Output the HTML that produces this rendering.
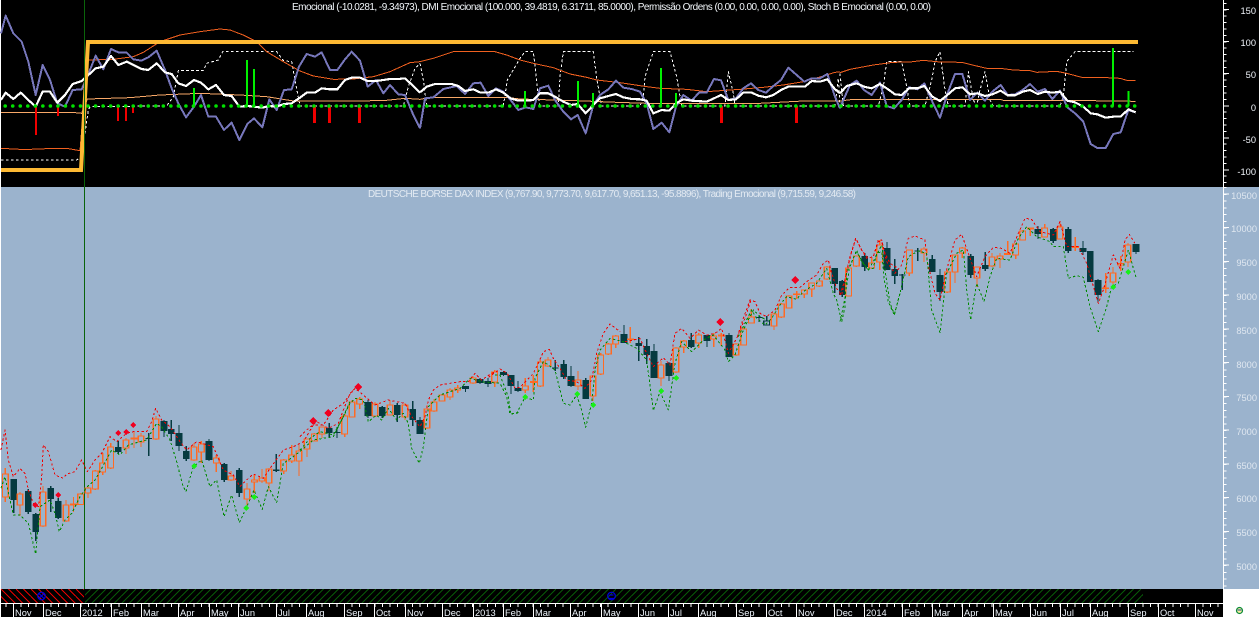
<!DOCTYPE html>
<html><head><meta charset="utf-8"><title>DAX</title>
<style>
html,body{margin:0;padding:0;background:#000;width:1259px;height:617px;overflow:hidden}
svg{display:block;font-family:"Liberation Sans",Arial,sans-serif}
</style></head><body>
<svg width="1259" height="617" viewBox="0 0 1259 617" xmlns="http://www.w3.org/2000/svg" shape-rendering="crispEdges">
<defs>
<pattern id="hr" width="15" height="15" patternUnits="userSpaceOnUse" x="1" y="589"><path d="M0 0L15 15M7.5 0L15 7.5M0 7.5L7.5 15" stroke="#e80000" stroke-width="1" fill="none"/></pattern>
<pattern id="hg" width="15" height="15" patternUnits="userSpaceOnUse" x="1" y="589"><path d="M0 15L15 0M0 7.5L7.5 0M7.5 15L15 7.5" stroke="#085808" stroke-width="1" fill="none"/></pattern>
</defs>
<rect width="1259" height="617" fill="#000"/>
<rect x="0" y="187" width="1259" height="402" fill="#9bb3cd"/>
<rect x="0" y="0" width="1" height="617" fill="#fff"/>
<rect x="1223" y="589" width="36" height="28" fill="#fff"/>

<!-- TOP PANEL -->
<g fill="none" stroke-linejoin="round">
<g transform="scale(.33333)">
<polyline stroke="#fff" stroke-width="3" stroke-dasharray="8 7" points="3,480 230,480 245,470 265,330 270,320 500,318 520,290 535,212 610,212 620,190 655,180 668,155 830,155 850,182 875,185 885,240 900,318 1210,318 1225,260 1245,205 1260,190"/>
<polyline stroke="#f0601f" stroke-width="3" points="3,445 60,448 90,448 165,445 200,445 240,452 262,180 340,178 400,170 430,157 480,125 540,105 600,95 660,87 690,90 730,105 770,125 800,155 850,185 900,213 940,228 1000,238 1060,237 1120,230 1170,215 1230,188 1260,185"/>
<polyline stroke="#f8a868" stroke-width="3" points="3,338 90,338 225,338 245,340 262,297 390,293 480,285 600,280 720,285 800,290 880,303 1000,303 1150,302 1215,295 1260,298"/>
<polyline stroke="#7777bb" stroke-width="6" points="3,100 17,47 40,100 65,125 85,185 107,285 128,195 150,240 172,310 195,320 218,270 245,268 262,230 287,167 310,208 333,147 355,157 380,158 400,178 425,182 445,172 470,152 495,210 515,265 535,310 558,352 582,320 603,285 625,350 648,350 672,390 695,368 718,420 742,372 762,355 787,382 808,298 830,330 852,270 875,268 897,200 920,162 945,170 965,157 990,210 1012,210 1035,178 1055,155 1080,182 1103,260 1128,240 1150,280 1170,255 1195,283 1215,285 1240,345 1260,385"/>
<polyline stroke="#fff" stroke-width="6.500" points="3,300 17,278 40,297 62,278 85,300 107,320 128,275 150,275 172,308 195,285 218,252 245,243 262,228 287,205 310,200 333,168 355,195 380,185 400,195 425,207 445,210 470,190 495,217 515,222 535,250 558,258 582,240 603,248 625,268 648,255 672,285 695,288 718,320 742,318 762,320 787,323 808,318 830,320 852,312 875,310 897,295 920,278 945,278 965,265 990,268 1012,268 1035,240 1055,233 1080,233 1103,243 1128,243 1150,240 1170,237 1195,237 1215,235 1240,258 1260,278"/>
</g>
<g transform="translate(420,0) scale(.33333)">
<polyline stroke="#fff" stroke-width="3" stroke-dasharray="8 7" points="0,190 10,240 20,318 250,318 262,240 300,175 315,155 340,155 350,240 355,290 360,318 415,318 420,230 430,155 520,155 530,235 545,318 660,318 670,290 675,230 700,155 750,155 770,230 785,318 915,318 925,215 940,280 945,318 1245,318 1255,235 1260,318"/>
<polyline stroke="#f0601f" stroke-width="3" points="0,185 40,175 100,155 225,155 260,165 300,180 340,190 400,203 450,222 500,232 530,240 600,248 680,260 720,265 800,268 860,275 960,268 1030,262 1090,255 1150,245 1210,228 1245,217 1260,216"/>
<polyline stroke="#f8a868" stroke-width="3" points="0,298 30,292 260,292 300,297 470,302 590,307 680,310 1000,311 1150,303 1260,303"/>
<polyline stroke="#7777bb" stroke-width="6" points="0,385 15,295 40,292 70,267 110,258 135,282 160,250 182,248 205,288 228,265 250,275 272,300 295,330 317,322 340,327 360,265 385,257 405,300 430,335 453,358 473,345 497,400 520,315 540,285 565,268 588,242 610,263 635,267 660,275 680,310 700,387 725,368 748,397 768,320 790,285 815,302 837,278 860,278 882,237 903,241 925,300 948,295 970,265 993,250 1015,270 1038,278 1060,258 1083,240 1105,203 1130,225 1153,245 1175,235 1200,235 1222,222 1245,290 1260,325"/>
<polyline stroke="#fff" stroke-width="6.500" points="0,277 20,260 45,252 95,252 115,258 135,273 160,268 182,278 205,278 228,268 250,278 272,295 295,302 317,302 340,300 360,280 385,280 405,290 430,305 453,315 473,312 497,340 520,315 540,295 565,288 588,282 610,292 635,297 660,298 680,302 700,340 725,330 748,332 768,310 790,298 815,302 860,305 882,295 903,285 925,300 948,298 970,278 993,277 1015,287 1038,292 1060,285 1083,270 1105,260 1155,260 1175,243 1200,245 1222,238 1245,268 1260,280"/>
</g>
<g transform="translate(840,0) scale(.33333)">
<polyline stroke="#fff" stroke-width="3" stroke-dasharray="8 7" points="0,220 10,318 115,318 130,260 140,185 185,185 200,260 210,318 255,318 275,240 285,185 300,155 315,270 325,318 375,318 385,215 400,300 410,318 420,270 435,215 450,300 460,318 660,318 670,290 680,185 705,155 880,155"/>
<polyline stroke="#f0601f" stroke-width="3" points="0,218 30,208 100,195 160,187 210,186 250,181 300,186 365,187 410,198 440,205 480,205 520,210 570,212 590,217 650,214 680,220 725,232 800,233 840,235 860,241 887,241"/>
<polyline stroke="#f8a868" stroke-width="3" points="0,303 40,298 480,298 490,301 680,301 887,304"/>
<polyline stroke="#7777bb" stroke-width="6" points="0,325 10,300 30,255 50,242 72,270 95,285 120,248 140,318 162,325 185,300 207,262 232,268 253,250 277,305 300,353 322,282 345,222 367,222 390,300 412,278 435,302 457,275 482,255 503,285 525,283 548,270 570,252 593,275 615,267 637,297 660,272 682,322 705,340 730,365 752,432 772,444 797,444 820,402 842,397 865,330 887,337"/>
<polyline stroke="#fff" stroke-width="6.500" points="0,280 20,258 50,250 72,260 95,265 120,252 140,265 165,283 185,285 207,265 232,265 253,258 277,290 300,303 322,285 345,265 367,262 390,283 412,280 435,288 457,283 482,272 503,286 525,286 548,275 570,270 593,282 615,275 637,278 660,275 682,302 705,307 730,320 752,340 772,343 797,353 820,350 842,350 865,328 887,337"/>
</g>
<!-- green bars -->
<path stroke="#00f000" stroke-width="2" d="M194 106V88M247 106V60M254 106V69M525 106V91M578 106V81M593 106V93M661 106V68M676 106V93M1113 106V48M1128.700 106V91"/>
<!-- red bars -->
<path stroke="#f00000" stroke-width="2" d="M36 106V135M58 106V116M118 106V121M126 106V121M133 106V113"/>
<path stroke="#f00000" stroke-width="3" d="M314.300 106V123M329.300 106V123M359.300 106V123M721.300 106V123M796.300 106V123"/>
<!-- gold -->
<polyline stroke="#fdb933" stroke-width="4" stroke-linejoin="miter" shape-rendering="auto" points="1,170 81,170 88,42 1138,42"/>
<!-- dots -->
<path d="M5.200 106H1138" stroke="#00e000" stroke-width="3.600" stroke-linecap="round" stroke-dasharray="0 7.530" shape-rendering="auto"/>
<!-- vline -->
<path d="M84.500 0V589" stroke="#0a640a" stroke-width="1"/>
</g>
<text x="292" y="10" font-size="10" fill="#f2f6fa" textLength="639" lengthAdjust="spacing">Emocional (-10.0281, -9.34973), DMI Emocional (100.000, 39.4819, 6.31711, 85.0000), Permissão Ordens (0.00, 0.00, 0.00, 0.00), Stoch B Emocional (0.00, 0.00)</text>
<text x="368" y="197" font-size="10" fill="#e3eaf2" textLength="488" lengthAdjust="spacing">DEUTSCHE BORSE DAX INDEX (9,767.90, 9,773.70, 9,617.70, 9,651.13, -95.8896), Trading Emocional (9,715.59, 9,246.58)</text>

<!-- CANDLES -->
<g fill="none" stroke-width="1">
<path stroke="#ff6a22" stroke-width="1.200" d="M5.300 468V502M20 492V516M43 486V527M66 500V522M73.500 497V512M80.700 493V505M88 486V498M95.300 470V490M102.700 453V475M110.700 443V469M126 438V454M134 432V448M141 433V447M156 416V440M194 443V461M201.300 441V463M216.300 455V472M231 471V481M247 483V505M254.300 475V493M262 469V483M269 468V491M283.700 459V474M291.700 445V463M299 445V476M307 439V457M314.300 433V441M322 427V438M344.700 414V437M352 400V417M359.700 397V409M375 402V417M390 400V415M405 403V420M427 405V429M434 399V412M442 394V401M450 388V400M457.700 385V393M473 376V384M494.700 370V387M525.300 378V393M533.300 375V392M540.300 360V387M548 357V367M578 371V390M593 375V401M600.700 353V375M608.300 343V355M615.700 335V348M630.300 327V343M661 361V386M676 347V373M683.700 340V353M698.700 333V348M713.700 333V347M721.300 333V346M736 343V356M743.700 328V345M751.300 309V323M774 313V330M781.300 303V318M789 295V308M796.700 291V299M804.300 290V298M811.700 283V297M819.300 281V287M827 266V280M848.700 268V296M856.300 256V267M871.700 258V268M879.700 240V270M909.300 250V276M924 247V262M947.300 270V293M955 255V283M962.300 247V258M977 267V287M992 253V267M1000 253V268M1007.700 241V255M1015.700 243V259M1022.700 230V240M1030.300 228V236M1044.700 224V237M1060 223V239M1075.300 237V251M1105.700 273V293M1113 267V288M1120.700 256V271M1128 243V267"/>
<path stroke="#053a40" stroke-width="1.300" d="M13.700 479V513M28.300 489V514M35.700 513V541M50.700 486V512M58.300 498V519M118.300 441V454M148.700 433V456M164 420V437M171.300 420V441M179 425V451M186.300 446V461M209 439V461M224.300 463V482M239.300 468V497M276.300 454V472M329.300 423V438M337 427V438M368 400V418M382.300 406V418M397.300 403V422M412.700 401V426M420 417V434M465.500 386V392M480 378V384M488 378V387M503.500 371V376M511 375V394M518 381V392M555.300 360V371M563.700 360V379M571 366V387M585.700 378V399M624 325V343M638.700 337V361M646.700 339V364M654 344V378M669 362V381M691.300 333V348M707 335V347M729 333V357M759 315V322M766.700 316V321M834.700 268V293M842.300 280V297M864.700 253V271M887 242V270M894.700 259V284M902.300 274V290M917.700 248V261M932.300 255V272M940 269V301M970.700 254V278M985.300 252V271M1038 226V239M1053.300 228V243M1068.300 227V253M1083 241V255M1090.300 251V282M1098 279V303M1136 244V254"/>
<path fill="#053a40" d="M13.700 479m-3.300 0h6.600V500h-6.600zM28.300 491m-3.300 0h6.600V512h-6.600zM35.700 514m-3.300 0h6.600V532h-6.600zM50.700 488m-3.300 0h6.600V499h-6.600zM58.300 501m-3.300 0h6.600V518h-6.600zM118.300 447m-3.300 0h6.600V452h-6.600zM148.700 438m-3.300 0h6.600V439h-6.600zM164 421m-3.300 0h6.600V431h-6.600zM171.300 429m-3.300 0h6.600V434h-6.600zM179 433m-3.300 0h6.600V446h-6.600zM186.300 451m-3.300 0h6.600V459h-6.600zM209 441m-3.300 0h6.600V460h-6.600zM224.300 464m-3.300 0h6.600V480h-6.600zM239.300 470m-3.300 0h6.600V493h-6.600zM276.300 469.500m-3.300 0h6.600V471h-6.600zM329.300 428m-3.300 0h6.600V433h-6.600zM337 432m-3.300 0h6.600V433h-6.600zM368 402m-3.300 0h6.600V416h-6.600zM382.300 407m-3.300 0h6.600V416h-6.600zM397.300 405m-3.300 0h6.600V415h-6.600zM412.700 409m-3.300 0h6.600V420h-6.600zM420 420m-3.300 0h6.600V434h-6.600zM465.500 386m-3.300 0h6.600V389h-6.600zM480 379m-3.300 0h6.600V383h-6.600zM488 381m-3.300 0h6.600V384h-6.600zM503.500 372m-3.300 0h6.600V375h-6.600zM511 375m-3.300 0h6.600V386h-6.600zM518 388m-3.300 0h6.600V391h-6.600zM555.300 367.500m-3.300 0h6.600V368.500h-6.600zM563.700 364m-3.300 0h6.600V377h-6.600zM571 376m-3.300 0h6.600V386h-6.600zM585.700 380m-3.300 0h6.600V399h-6.600zM624 334m-3.300 0h6.600V343h-6.600zM638.700 343m-3.300 0h6.600V346h-6.600zM646.700 346m-3.300 0h6.600V355h-6.600zM654 351m-3.300 0h6.600V378h-6.600zM669 363m-3.300 0h6.600V376h-6.600zM691.300 340m-3.300 0h6.600V347h-6.600zM707 335m-3.300 0h6.600V341h-6.600zM729 335m-3.300 0h6.600V357h-6.600zM759 317m-3.300 0h6.600V318h-6.600zM834.700 268m-3.300 0h6.600V284h-6.600zM842.300 281m-3.300 0h6.600V295h-6.600zM864.700 256m-3.300 0h6.600V267h-6.600zM887 248m-3.300 0h6.600V270h-6.600zM894.700 269m-3.300 0h6.600V276h-6.600zM902.300 274.500m-3.300 0h6.600V275.500h-6.600zM917.700 250.500m-3.300 0h6.600V251.500h-6.600zM932.300 259m-3.300 0h6.600V272h-6.600zM940 275m-3.300 0h6.600V292h-6.600zM970.700 256m-3.300 0h6.600V275h-6.600zM985.300 265m-3.300 0h6.600V269h-6.600zM1038 229m-3.300 0h6.600V234h-6.600zM1053.300 229m-3.300 0h6.600V241h-6.600zM1068.300 229m-3.300 0h6.600V251h-6.600zM1083 248m-3.300 0h6.600V252h-6.600zM1090.300 251m-3.300 0h6.600V282h-6.600zM1098 280m-3.300 0h6.600V295h-6.600zM1136 244m-3.300 0h6.600V252h-6.600z"/>
<path fill="#9bb3cd" stroke="#053a40" stroke-width="1.400" d="M766.700 321m-2.800 0h5.600V325h-5.600z"/>
<path fill="#9bb3cd" stroke="#ff6a22" stroke-width="1.400" d="M5.300 474m-2.800 0h5.600V497h-5.600zM20 494m-2.800 0h5.600V505h-5.600zM43 492m-2.800 0h5.600V526h-5.600zM66 505m-2.800 0h5.600V521h-5.600zM73.500 504m-2.800 0h5.600V505h-5.600zM80.700 494m-2.800 0h5.600V504.500h-5.600zM88 488m-2.800 0h5.600V493h-5.600zM95.300 471m-2.800 0h5.600V489h-5.600zM102.700 463m-2.800 0h5.600V472h-5.600zM110.700 447m-2.800 0h5.600V468h-5.600zM126 440m-2.800 0h5.600V448h-5.600zM134 438m-2.800 0h5.600V439h-5.600zM141 436m-2.800 0h5.600V442h-5.600zM156 419m-2.800 0h5.600V439h-5.600zM194 447m-2.800 0h5.600V460h-5.600zM201.300 444m-2.800 0h5.600V452h-5.600zM216.300 458m-2.800 0h5.600V463h-5.600zM231 476m-2.800 0h5.600V480h-5.600zM247 489m-2.800 0h5.600V499h-5.600zM254.300 480m-2.800 0h5.600V482h-5.600zM262 478m-2.800 0h5.600V481h-5.600zM269 469m-2.800 0h5.600V483h-5.600zM283.700 460m-2.800 0h5.600V471h-5.600zM291.700 455m-2.800 0h5.600V461h-5.600zM299 451m-2.800 0h5.600V461h-5.600zM307 439m-2.800 0h5.600V449h-5.600zM314.300 434m-2.800 0h5.600V441h-5.600zM322 427m-2.800 0h5.600V434h-5.600zM344.700 416m-2.800 0h5.600V434h-5.600zM352 402m-2.800 0h5.600V417h-5.600zM359.700 399m-2.800 0h5.600V404h-5.600zM375 404m-2.800 0h5.600V416h-5.600zM390 405m-2.800 0h5.600V415h-5.600zM405 405m-2.800 0h5.600V417h-5.600zM427 409m-2.800 0h5.600V428h-5.600zM434 402m-2.800 0h5.600V411h-5.600zM442 395m-2.800 0h5.600V401h-5.600zM450 390m-2.800 0h5.600V397h-5.600zM457.700 388m-2.800 0h5.600V390h-5.600zM473 378m-2.800 0h5.600V383h-5.600zM494.700 372m-2.800 0h5.600V382h-5.600zM525.300 386m-2.800 0h5.600V390h-5.600zM533.300 381.500m-2.800 0h5.600V382.500h-5.600zM540.300 362m-2.800 0h5.600V386h-5.600zM548 360m-2.800 0h5.600V366h-5.600zM578 380m-2.800 0h5.600V386h-5.600zM593 376m-2.800 0h5.600V396h-5.600zM600.700 355m-2.800 0h5.600V374h-5.600zM608.300 344m-2.800 0h5.600V354h-5.600zM615.700 336m-2.800 0h5.600V344h-5.600zM630.300 339m-2.800 0h5.600V339.500h-5.600zM661 365m-2.800 0h5.600V378h-5.600zM676 348m-2.800 0h5.600V372h-5.600zM683.700 341m-2.800 0h5.600V347h-5.600zM698.700 335m-2.800 0h5.600V343h-5.600zM713.700 336m-2.800 0h5.600V339h-5.600zM721.300 335m-2.800 0h5.600V336h-5.600zM736 344m-2.800 0h5.600V355h-5.600zM743.700 329m-2.800 0h5.600V345h-5.600zM751.300 317m-2.800 0h5.600V323h-5.600zM774 314m-2.800 0h5.600V326h-5.600zM781.300 304m-2.800 0h5.600V317h-5.600zM789 296m-2.800 0h5.600V308h-5.600zM796.700 294m-2.800 0h5.600V294.500h-5.600zM804.300 290m-2.800 0h5.600V294h-5.600zM811.700 283m-2.800 0h5.600V289h-5.600zM819.300 281m-2.800 0h5.600V286h-5.600zM827 267m-2.800 0h5.600V279h-5.600zM848.700 268m-2.800 0h5.600V296h-5.600zM856.300 256m-2.800 0h5.600V266h-5.600zM871.700 263m-2.800 0h5.600V268h-5.600zM879.700 245m-2.800 0h5.600V262h-5.600zM909.300 250m-2.800 0h5.600V273h-5.600zM924 249m-2.800 0h5.600V253h-5.600zM947.300 272m-2.800 0h5.600V292h-5.600zM955 255m-2.800 0h5.600V272h-5.600zM962.300 248m-2.800 0h5.600V253h-5.600zM977 267m-2.800 0h5.600V278h-5.600zM992 257m-2.800 0h5.600V266h-5.600zM1000 256m-2.800 0h5.600V259h-5.600zM1007.700 253.500m-2.800 0h5.600V254.500h-5.600zM1015.700 244m-2.800 0h5.600V255h-5.600zM1022.700 231m-2.800 0h5.600V240h-5.600zM1030.300 228m-2.800 0h5.600V228.700h-5.600zM1044.700 228m-2.800 0h5.600V237h-5.600zM1060 227m-2.800 0h5.600V239h-5.600zM1075.300 246.500m-2.800 0h5.600V247.500h-5.600zM1105.700 288m-2.800 0h5.600V288.500h-5.600zM1113 273m-2.800 0h5.600V282h-5.600zM1120.700 263.500m-2.800 0h5.600V265h-5.600zM1128 245m-2.800 0h5.600V262h-5.600z"/>
</g>

<!-- BANDS -->
<g fill="none" stroke-width="3" stroke-dasharray="7 7" stroke-linejoin="round">
<g transform="translate(0,400) scale(.33333)">
<polyline stroke="#f00000" points="3,150 15,90 25,180 40,230 60,205 75,220 85,270 100,310 115,320 125,230 130,135 145,155 165,225 190,235 200,222 225,215 245,180 262,215 285,180 305,160 330,110 350,125 380,100 400,95 440,95 455,65 467,25 485,60 510,80 540,125 560,150 590,125 640,140 655,175 670,210 700,225 720,260 740,240 760,222 790,235 810,205 850,150 880,140 910,125 940,75 970,75 1000,30 1030,10 1060,-30"/>
<polyline stroke="#008a00" points="3,265 15,230 30,300 40,345 60,345 85,370 107,462 120,320 135,310 150,300 165,340 178,395 195,360 215,340 240,290 262,260 285,240 305,205 335,150 360,165 385,135 420,125 440,120 470,70 485,80 510,120 530,185 548,255 558,275 580,200 605,180 630,260 650,240 672,350 695,285 718,368 745,310 762,270 787,328 805,260 830,308 850,190 880,170 905,150 940,120 1000,110 1025,60 1050,5"/>
</g>
<g transform="translate(300,340) scale(.33333)">
<polyline stroke="#f00000" points="0,290 20,270 50,245 85,265 115,250 130,210 150,160 165,145 190,165 225,195 265,180 290,185 315,190 335,230 360,260 375,230 385,180 400,150 420,135 480,125 505,125 525,100 545,120 575,100 600,90"/>
<polyline stroke="#008a00" points="0,330 30,295 60,275 100,285 125,240 150,190 165,175 190,180 205,245 230,225 245,240 265,205 290,240 310,220 325,250 335,325 358,370 370,320 385,200 420,165 450,155 480,145 510,115 545,125 600,130 620,170 630,222 655,218"/>
</g>
<g transform="translate(420,300) scale(.33333)">
<polyline stroke="#f00000" points="615,125 640,120 660,115 680,160 700,200 730,173 750,195 765,100 785,85 810,115 835,90 860,105 885,100 905,85 925,160 950,115 975,55 993,0"/>
<polyline stroke="#f00000" points="205,232 240,207 262,220 285,265 300,262 340,220 355,190 370,155 388,148 400,175 420,205 440,240 470,245 495,265 515,240 530,160 550,100 570,72 600,95"/>
<polyline stroke="#008a00" points="225,225 240,225 265,290 272,342 290,340 315,292 340,300 345,235 370,185 385,195 405,210 430,310 450,315 470,285 485,330 497,382 515,310 525,210 540,150 570,115 610,125 650,145 680,180 700,332 720,275 745,330 765,190 785,125 815,155 850,120 880,105 915,150 925,185 945,165 970,90 1000,30 1020,50 1040,60"/>
</g>
<g transform="translate(700,230) scale(.33333)">
<polyline stroke="#f00000" points="112,320 130,265 150,210 165,215 180,250 200,260 225,240 245,195 270,172 300,172 320,155 350,135 370,100 385,90 395,130 410,175 425,195 440,125 450,80 467,25 485,60 500,85 520,80 535,35 545,35 555,70 570,100 595,115"/>
<polyline stroke="#008a00" points="115,320 130,290 155,240 170,265 195,285 215,265 240,225 260,200 290,208 310,185 350,160 380,115 400,190 410,210 425,275 435,230 440,125 470,65 490,100 505,120 520,115 530,70 545,65 553,150 565,215 583,255 600,190"/>
</g>
<g transform="translate(840,190) scale(.33333)">
<polyline stroke="#f00000" points="0,315 15,270 35,185 48,145 65,180 85,205 100,200 115,150 125,150 140,215 165,250 185,225 205,145 225,138 255,150 262,215 285,310 300,330 320,240 345,150 365,133 385,190 410,260 435,200 460,172 485,175 510,190 535,130 555,85 575,88 600,125 640,135 660,95 680,170 715,170 740,220 775,340 790,300 820,195 840,235 855,150 868,133 885,160"/>
<polyline stroke="#008a00" points="0,395 12,340 28,235 50,180 65,215 85,240 105,205 125,165 135,240 150,340 163,373 180,310 205,200 235,183 260,190 275,360 300,428 320,250 350,190 370,180 380,300 392,390 410,280 432,335 450,260 470,205 510,210 535,145 560,110 590,140 630,155 640,170 670,170 685,265 710,257 730,262 750,350 775,425 800,350 815,290 835,280 850,230 865,180 880,235 888,262"/>
</g>
</g>

<!-- DIAMONDS -->
<g fill="#f00020">
<path d="M35 502l3 3-3 3-3-3zM58 492l3 3-3 3-3-3zM118 430l3 3-3 3-3-3zM126 429l3 3-3 3-3-3zM133 422l3 3-3 3-3-3z"/>
<path d="M313 417l4 4-4 4-4-4zM328 409l4 4-4 4-4-4zM358 383l4 4-4 4-4-4zM720 318l4 4-4 4-4-4zM795 276l4 4-4 4-4-4z"/>
</g>
<path fill="#18f018" d="M194 463l3 3-3 3-3-3zM246 505l3 3-3 3-3-3zM254 494l3 3-3 3-3-3zM525 394l3 3-3 3-3-3zM577 391l3 3-3 3-3-3zM593 402l3 3-3 3-3-3zM661 388l3 3-3 3-3-3zM676 375l3 3-3 3-3-3zM1113 284l3 3-3 3-3-3zM1128 269l3 3-3 3-3-3z"/>

<!-- RIGHT AXIS -->
<g stroke="#fff" fill="none">
<path d="M1223.500 0V617" stroke-width="1"/>
<path d="M1225 2.900V187" stroke-width="3" stroke-dasharray="1 5.400"/>
<path d="M1225 187.200V589" stroke-width="3" stroke-dasharray="1 5.750"/>
<path d="M1223 9.500h6M1223 41.500h6M1223 73.500h6M1223 106h6M1223 138h6M1223 170h6M1223 194h6M1223 227.700h6M1223 261.500h6M1223 295.200h6M1223 329h6M1223 362.700h6M1223 396.400h6M1223 430h6M1223 463.900h6M1223 497.600h6M1223 531.300h6M1223 565h6" stroke-width="1"/>
</g>
<g font-size="9.300" fill="#eef2f8" text-anchor="end">
<text x="1256" y="14">150</text><text x="1256" y="46">100</text><text x="1256" y="78">50</text><text x="1256" y="111">0</text><text x="1256" y="143">-50</text><text x="1256" y="175">-100</text>
</g>
<g font-size="9.300" fill="#dfe7f0" text-anchor="end">
<text x="1257" y="199">10500</text><text x="1257" y="232">10000</text><text x="1257" y="266">9500</text><text x="1257" y="300">9000</text><text x="1257" y="334">8500</text><text x="1257" y="368">8000</text><text x="1257" y="401">7500</text><text x="1257" y="435">7000</text><text x="1257" y="469">6500</text><text x="1257" y="502">6000</text><text x="1257" y="536">5500</text><text x="1257" y="570">5000</text>
</g>

<!-- STRIP -->
<rect x="1" y="589" width="83" height="14" fill="url(#hr)"/>
<rect x="85" y="589" width="1058" height="14" fill="url(#hg)"/>
<g fill="none" stroke="#0000e0" stroke-width="1.200" shape-rendering="auto">
<circle cx="41.500" cy="596" r="3.800"/><path d="M39 593.500l5 5M44 593.500l-5 5"/>
<circle cx="611.500" cy="596" r="3.800"/><path d="M609.500 595h4M609 598.500h5"/>
</g>

<!-- TIME AXIS -->
<rect x="1" y="603" width="1222" height="14" fill="#000"/>
<path d="M1 603.500H1223" stroke="#fff" stroke-width="1"/>
<path d="M5.300 605.500H1223" stroke="#fff" stroke-width="3" stroke-dasharray="1 6.530"/>
<path stroke="#fff" stroke-width="1" d="M13.500 603V617M43.500 603V617M80.500 603V617M111.500 603V617M141.500 603V617M178.500 603V617M209.500 603V617M238.500 603V617M276.500 603V617M306.500 603V617M344.500 603V617M374.500 603V617M405.500 603V617M442.500 603V617M473.500 603V617M503.500 603V617M533.500 603V617M570.500 603V617M601.500 603V617M638.500 603V617M668.500 603V617M698.500 603V617M736.500 603V617M766.500 603V617M796.500 603V617M834.500 603V617M864.500 603V617M902.500 603V617M932.500 603V617M962.500 603V617M993.500 603V617M1030.500 603V617M1060.500 603V617M1090.500 603V617M1128.500 603V617M1158.500 603V617M1195.500 603V617"/>
<g font-size="9.300" fill="#eef4fb">
<text x="15" y="616">Nov</text><text x="45" y="616">Dec</text><text x="82" y="616">2012</text><text x="113" y="616">Feb</text><text x="143" y="616">Mar</text><text x="180" y="616">Apr</text><text x="211" y="616">May</text><text x="240" y="616">Jun</text><text x="278" y="616">Jul</text><text x="308" y="616">Aug</text><text x="346" y="616">Sep</text><text x="376" y="616">Oct</text><text x="407" y="616">Nov</text><text x="444" y="616">Dec</text><text x="475" y="616">2013</text><text x="505" y="616">Feb</text><text x="535" y="616">Mar</text><text x="572" y="616">Apr</text><text x="603" y="616">May</text><text x="640" y="616">Jun</text><text x="670" y="616">Jul</text><text x="700" y="616">Aug</text><text x="738" y="616">Sep</text><text x="768" y="616">Oct</text><text x="798" y="616">Nov</text><text x="836" y="616">Dec</text><text x="866" y="616">2014</text><text x="904" y="616">Feb</text><text x="934" y="616">Mar</text><text x="964" y="616">Apr</text><text x="995" y="616">May</text><text x="1032" y="616">Jun</text><text x="1062" y="616">Jul</text><text x="1092" y="616">Aug</text><text x="1130" y="616">Sep</text><text x="1160" y="616">Oct</text><text x="1197" y="616">Nov</text>
</g>
<!-- smiley -->
<circle cx="1239.500" cy="610.500" r="3" fill="#fdf0a0" stroke="#0a8a3a" stroke-width="1.200" shape-rendering="auto"/>
<path d="M1237.500 610h4" stroke="#0a4a8a" stroke-width="1"/>
</svg>
</body></html>
